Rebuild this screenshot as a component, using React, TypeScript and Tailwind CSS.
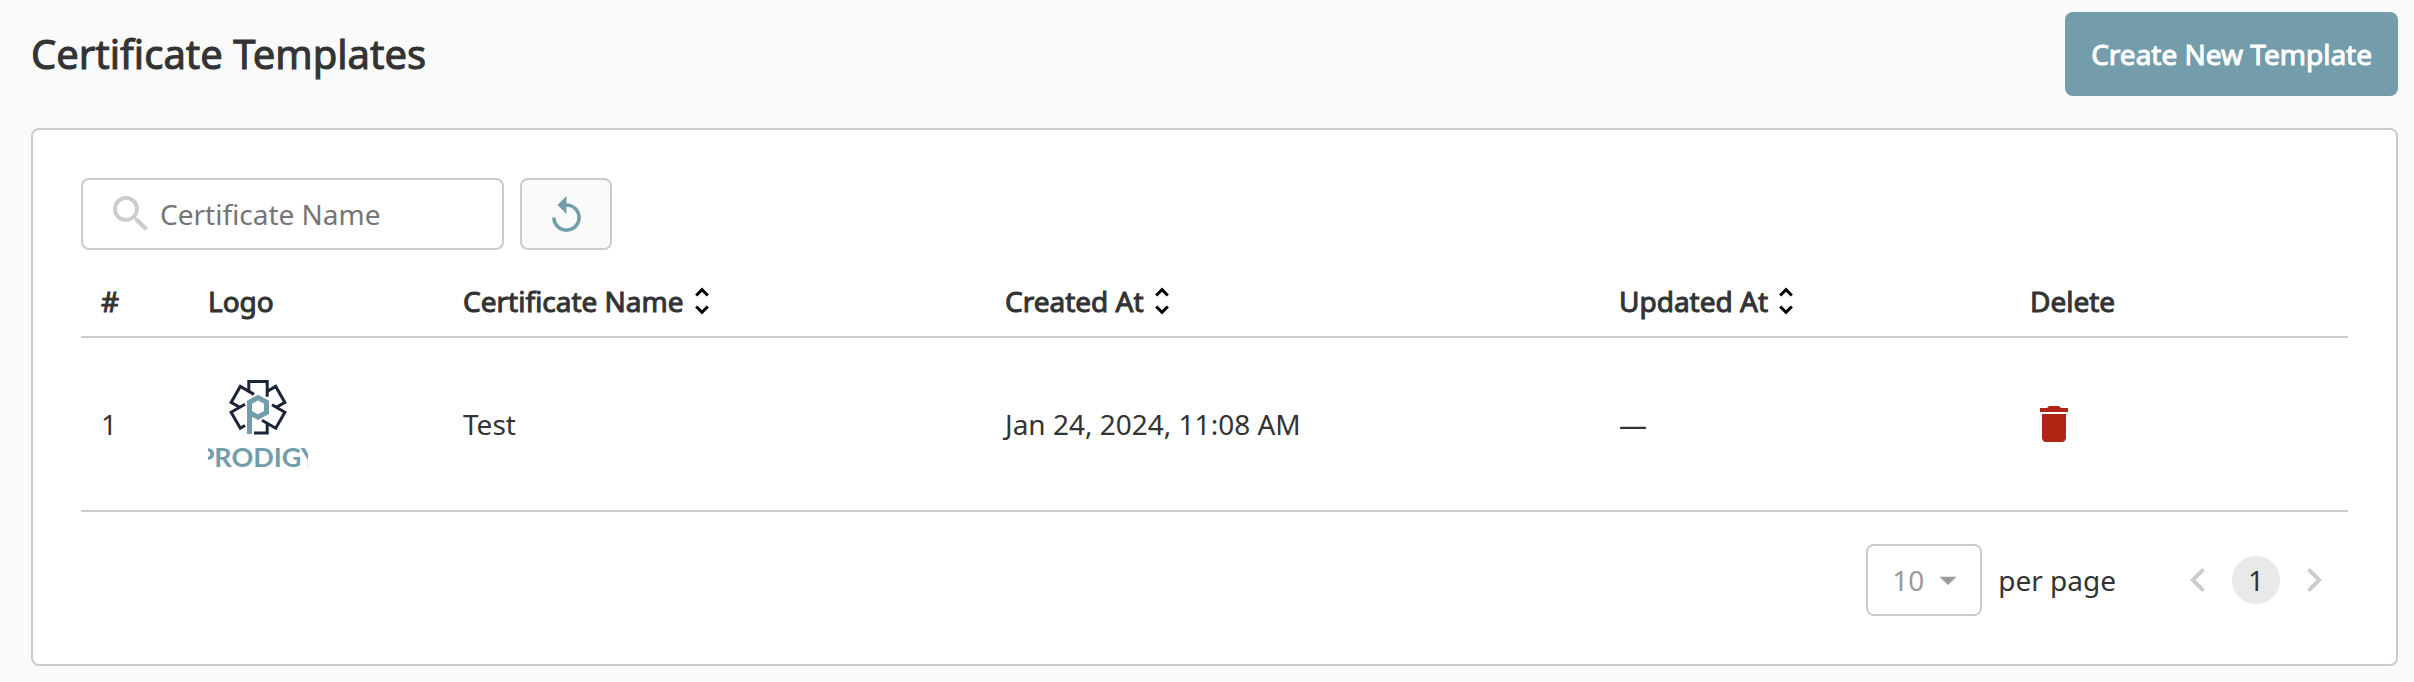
import { useState } from "react";
import {
  MdArrowDropDown,
  MdChevronLeft,
  MdChevronRight,
  MdDelete,
  MdSearch,
  MdUnfoldMore,
} from "react-icons/md";

const strong = "font-normal [-webkit-text-stroke:1px_currentColor]";

function ReplayIcon() {
  return (
    <svg viewBox="4 1 16 20" className="h-9 w-[29px] fill-current" aria-hidden="true">
      <path d="M12 5V1L7 6l5 5V7c3.31 0 6 2.69 6 6s-2.69 6-6 6-6-2.69-6-6H4c0 4.42 3.58 8 8 8s8-3.58 8-8-3.58-8-8-8z" />
    </svg>
  );
}

function ProdigyLogo() {
  return (
    <svg viewBox="0 0 100 100" className="block size-[100px]" role="img" aria-label="Prodigy">
      <g fill="none" stroke="#1b2439" strokeWidth="3">
        <path d="M40.800 17.400V7.500H59.200V22.700" />
        <path d="M59.200 17.400L67.700 12.400L76.900 28.400L68.400 33.300" />
        <path d="M64 30.800L76.900 38.200L67.700 54.200L54 46.300" />
        <path d="M59.200 49.200V59.100H46" />
        <path d="M46 20.400L32.300 12.400L23.100 28.400L31.600 33.300" />
        <path d="M37 30.200L23.100 38.200L32.300 54.200L37 51.500" />
      </g>
      <path
        d="M41.500 60V28.300L50 23.600L58.500 28.300V38.500L50 43.200L41.500 38.500"
        fill="none"
        stroke="#739dab"
        strokeWidth="5"
      />
      <text x="50" y="93" textAnchor="middle" fontFamily="Lato, sans-serif" fontWeight="700" fontSize="27" fill="#739dab">
        PRODIGY
      </text>
    </svg>
  );
}

function HeaderCell({ label, sortable = false }: { label: string; sortable?: boolean }) {
  return (
    <th scope="col" className="px-5 pt-[17px] pb-[15px] text-left font-normal">
      {sortable ? (
        <button type="button" className={`flex items-center ${strong}`}>
          {label}
          <MdUnfoldMore className="size-9 text-black" aria-hidden="true" />
        </button>
      ) : (
        <span className={strong}>{label}</span>
      )}
    </th>
  );
}

const rows = [{ id: 1, name: "Test", created: "Jan 24, 2024, 11:08 AM", updated: "—" }];

export default function App() {
  const [query, setQuery] = useState("");
  return (
    <main className="min-h-screen bg-[#fafafa] pt-3 pr-4 pb-4 pl-[31px] font-['Noto_Sans',sans-serif] text-[28px] leading-10 text-[#333]">
      <header className="flex items-center justify-between">
        <h1 className={`text-[40px] ${strong}`}>Certificate Templates</h1>
        <button
          type="button"
          className={`h-21 rounded-lg bg-[#739dab] px-[26px] text-white ${strong}`}
        >
          Create New Template
        </button>
      </header>

      <section className="mt-8 rounded-lg border-2 border-[#ccc] bg-white p-12">
        <div className="flex gap-4">
          <label className="flex h-18 w-[423px] items-center rounded-lg border-2 border-[#ccc] pr-4 pl-6">
            <MdSearch className="size-12 shrink-0 text-[#ccc]" aria-hidden="true" />
            <input
              type="text"
              aria-label="Certificate Name"
              placeholder="Certificate Name"
              value={query}
              onChange={(e) => setQuery(e.target.value)}
              className="w-full min-w-0 pl-[5px] outline-none placeholder:text-[#757575]"
            />
          </label>
          <button
            type="button"
            aria-label="Reset"
            onClick={() => setQuery("")}
            className="flex h-18 w-23 items-center justify-center rounded-lg border-2 border-[#ccc] bg-[#fafafa] text-[#739dab]"
          >
            <ReplayIcon />
          </button>
        </div>

        <table className="mt-[14px] w-full table-fixed border-collapse">
          <colgroup>
            <col className="w-[107px]" />
            <col className="w-[255px]" />
            <col className="w-[542px]" />
            <col className="w-[614px]" />
            <col className="w-[411px]" />
            <col className="w-[338px]" />
          </colgroup>
          <thead>
            <tr className="border-b-2 border-[#ccc]">
              <HeaderCell label="#" />
              <HeaderCell label="Logo" />
              <HeaderCell label="Certificate Name" sortable />
              <HeaderCell label="Created At" sortable />
              <HeaderCell label="Updated At" sortable />
              <HeaderCell label="Delete" />
            </tr>
          </thead>
          <tbody>
            {rows.map((row) => (
              <tr key={row.id} className="border-b-2 border-[#ccc]">
                <td className="px-5">{row.id}</td>
                <td className="px-5 py-9">
                  <ProdigyLogo />
                </td>
                <td className="px-5">{row.name}</td>
                <td className="px-5">{row.created}</td>
                <td className="px-5">{row.updated}</td>
                <td className="px-5">
                  <button type="button" aria-label={`Delete ${row.name}`} className="block text-[#b02614]">
                    <MdDelete className="size-12" />
                  </button>
                </td>
              </tr>
            ))}
          </tbody>
        </table>

        <div className="mt-8 flex items-center justify-end pr-[10px]">
          <label className="flex items-center gap-4">
            <span className="relative flex items-center">
              <select
                defaultValue="10"
                className="h-18 w-29 appearance-none rounded-lg border-2 border-[#ccc] bg-white pl-6 text-[#999] outline-none"
              >
                <option>10</option>
                <option>25</option>
                <option>50</option>
              </select>
              <MdArrowDropDown
                className="pointer-events-none absolute right-[14px] size-10 text-[#999]"
                aria-hidden="true"
              />
            </span>
            per page
          </label>
          <nav aria-label="Pagination" className="ml-[58px] flex items-center gap-[10px]">
            <button type="button" aria-label="Previous page" className="text-[#ccc]">
              <MdChevronLeft className="size-12" />
            </button>
            <button type="button" aria-current="page" className="size-12 rounded-full bg-[#e9e9e9]">
              1
            </button>
            <button type="button" aria-label="Next page" className="text-[#ccc]">
              <MdChevronRight className="size-12" />
            </button>
          </nav>
        </div>
      </section>
    </main>
  );
}
